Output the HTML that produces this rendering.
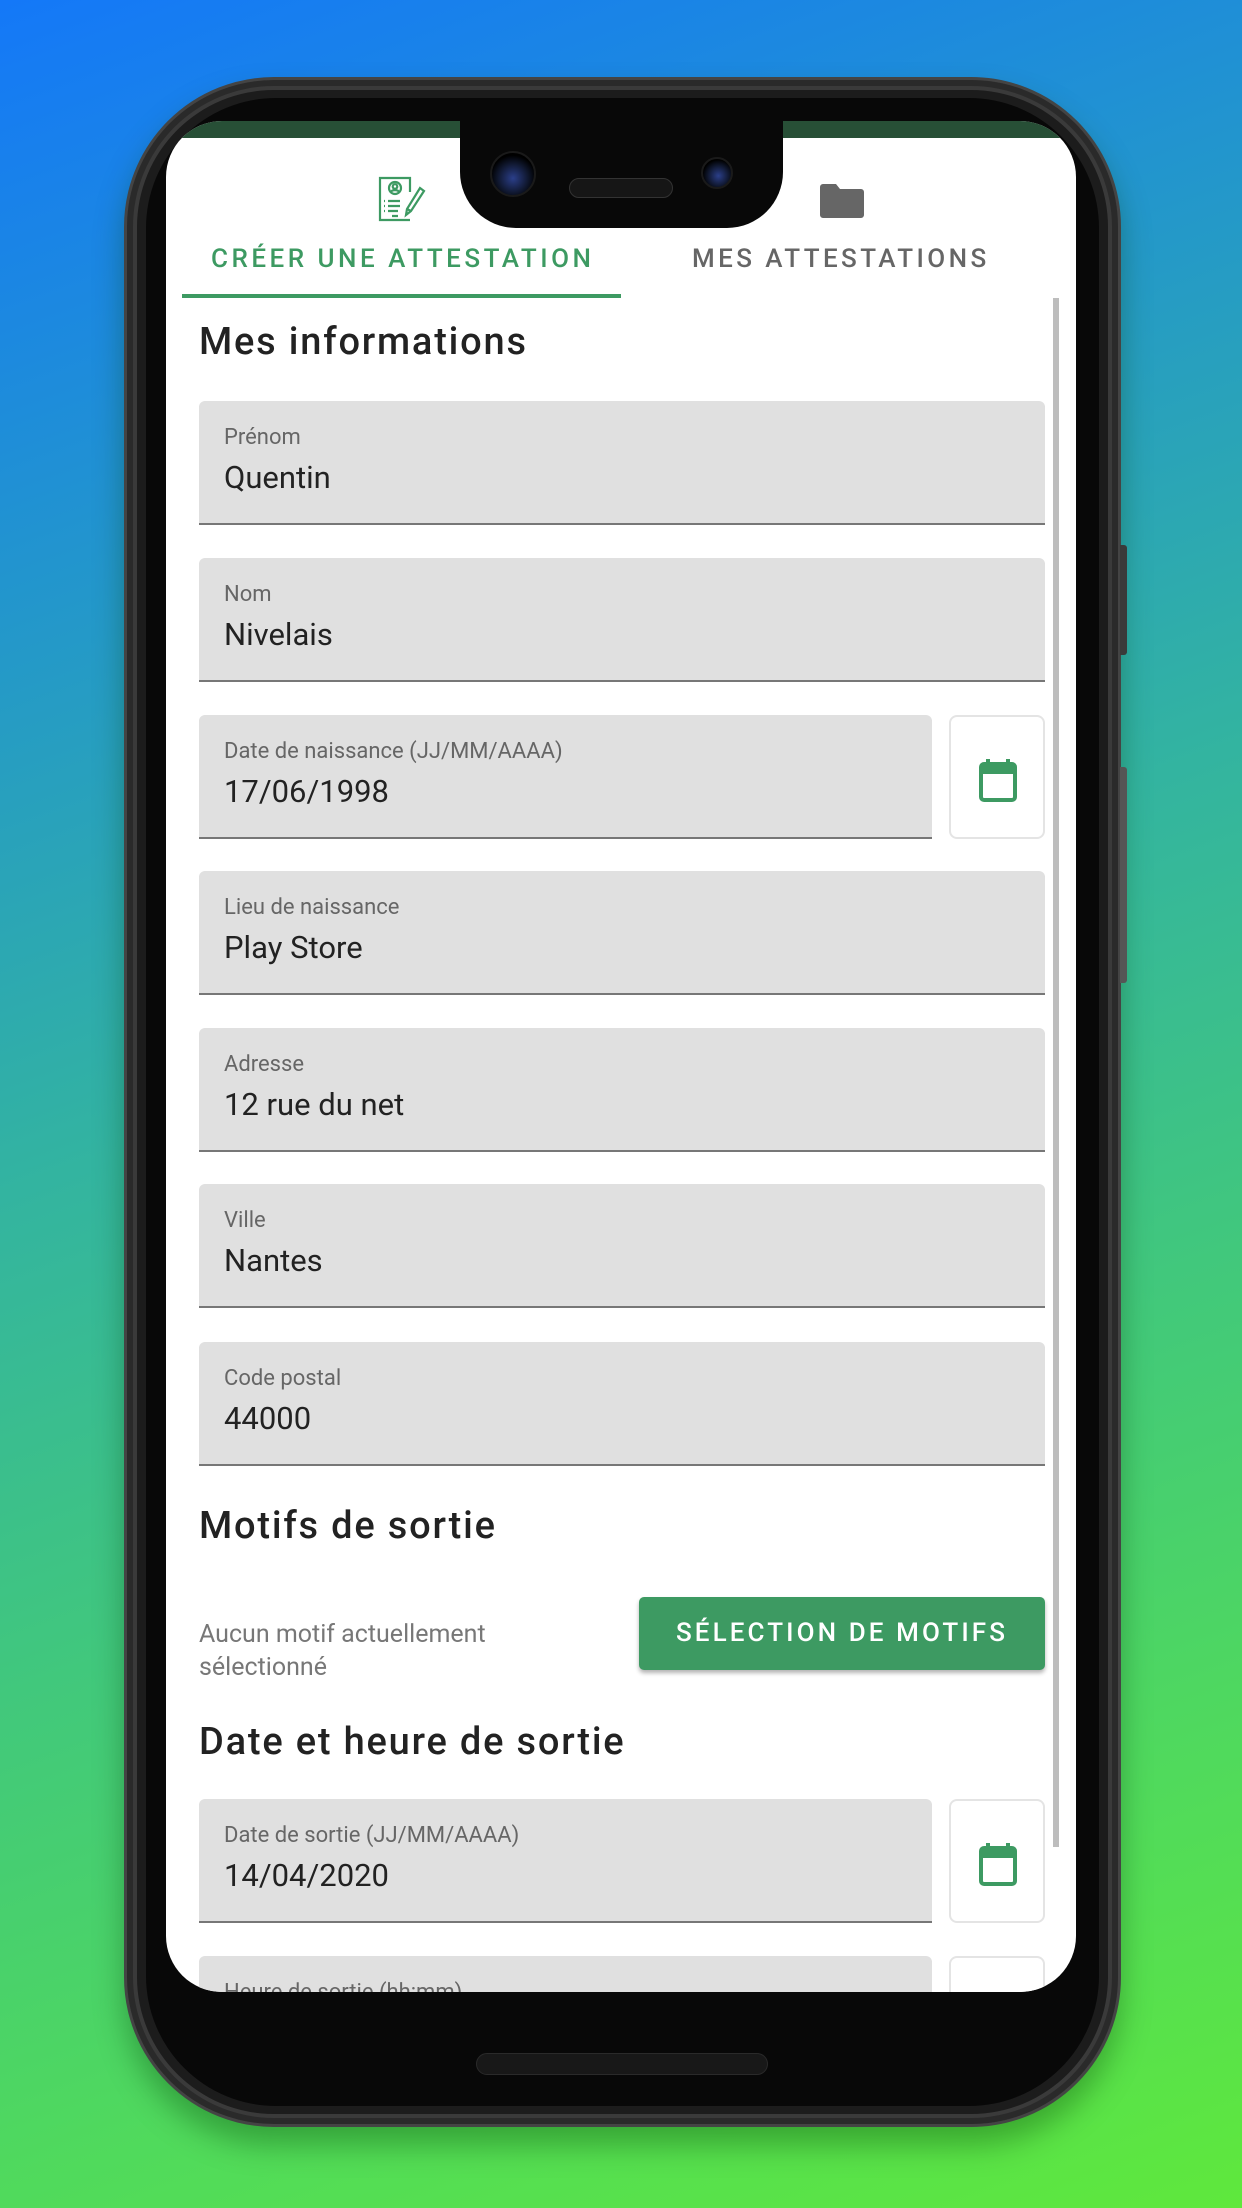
<!DOCTYPE html>
<html><head><meta charset="utf-8">
<style>
*{margin:0;padding:0;box-sizing:border-box}
html,body{width:1242px;height:2208px;overflow:hidden}
body{position:relative;font-family:"Roboto","Liberation Sans",sans-serif;
background:linear-gradient(160deg,#1478f8 0%,#2499c8 25%,#33b4a0 45%,#42c97a 65%,#52dc58 85%,#5fe83c 100%)}
.abs{position:absolute}
.phone{left:124px;top:77px;width:997px;height:2050px;border-radius:150px;background:#1c1c1c;
border:3px solid #444;box-shadow:0 18px 30px rgba(0,60,0,.35), inset 0 0 0 6px #2a2a2a, inset 0 0 0 10px #3a3a3a}
.bezel{left:146px;top:98px;width:953px;height:2008px;border-radius:130px;background:#080808}
.screen{left:166px;top:121px;width:910px;height:1871px;border-radius:56px;background:#fff;overflow:hidden}
.status{left:0;top:0;width:910px;height:17px;background:#274f36}
.notch{left:294px;top:-10px;width:323px;height:117px;background:#080808;border-radius:0 0 56px 56px}
.field{position:absolute;left:33px;width:846px;height:124px;background:#e0e0e0;border-radius:6px 6px 0 0;border-bottom:2px solid #777}
.field.short{width:733px}
.lab{position:absolute;left:25px;top:24px;font-size:22px;color:#666}
.val{position:absolute;left:25px;top:58px;font-size:31px;color:#222}
.cal{position:absolute;left:783px;width:96px;height:124px;border:2px solid #e4e4e4;border-radius:8px;background:#fff}
.cal svg{position:absolute;left:27px;top:40px}
h2{position:absolute;left:33px;font-size:38px;font-weight:500;color:#222;letter-spacing:1.8px}
</style></head><body>
<div class="abs phone"></div>
<div class="abs" style="left:1120px;top:545px;width:7px;height:110px;background:#3a3a3a;border-radius:0 3px 3px 0"></div>
<div class="abs" style="left:1120px;top:767px;width:7px;height:216px;background:#555;border-radius:0 3px 3px 0"></div>
<div class="abs bezel"></div>
<div class="abs screen">
  <div class="abs status"></div>
  <svg class="abs" style="left:212px;top:55px" width="48" height="48" viewBox="0 0 48 48" fill="none" stroke="#3d9a62" stroke-width="2.2">
    <path d="M32 44H2V2h30v14"/>
    <circle cx="17" cy="12" r="6"/><circle cx="17" cy="10.5" r="2.3"/><path d="M13 16c1-2.5 7-2.5 8 0"/>
    <path d="M6 25h1M10 25h12M6 30h1M10 30h12M6 35h1M10 35h10M14 40h6"/>
    <path d="M42 12l4 3-13 20-5 4 1-6z"/><path d="M29 33l4 2"/>
  </svg>
  <svg class="abs" style="left:654px;top:63px" width="44" height="34" viewBox="0 0 44 34"><path d="M0 3a3 3 0 0 1 3-3h13l4 5h21a3 3 0 0 1 3 3v23a3 3 0 0 1-3 3H3a3 3 0 0 1-3-3z" fill="#666"/></svg>
  <div class="abs" style="left:45px;top:123px;font-size:26px;font-weight:500;color:#3d9a62;letter-spacing:3.5px">CRÉER UNE ATTESTATION</div>
  <div class="abs" style="left:526px;top:123px;font-size:26px;font-weight:500;color:#666;letter-spacing:3.4px">MES ATTESTATIONS</div>
  <div class="abs" style="left:16px;top:173px;width:439px;height:4px;background:#3d9a62"></div>
  <div class="abs" style="left:887px;top:177px;width:6px;height:1549px;background:#bdbdbd"></div>
  <div class="abs notch">
    <div class="abs" style="left:30px;top:40px;width:46px;height:46px;border-radius:50%;background:radial-gradient(circle at 50% 60%,#2b3f8a 0,#101830 45%,#000 70%);border:2px solid #1a1a1a"></div>
    <div class="abs" style="left:241px;top:46px;width:32px;height:32px;border-radius:50%;background:radial-gradient(circle at 55% 60%,#2b3f8a 0,#101830 45%,#000 70%);border:2px solid #1a1a1a"></div>
    <div class="abs" style="left:109px;top:67px;width:104px;height:20px;border-radius:10px;background:#161616;border:1px solid #333"></div>
  </div>
  <h2 style="top:199px">Mes informations</h2>
  <div class="field" style="top:280px"><div class="lab">Prénom</div><div class="val">Quentin</div></div>
  <div class="field" style="top:437px"><div class="lab">Nom</div><div class="val">Nivelais</div></div>
  <div class="field short" style="top:594px"><div class="lab">Date de naissance (JJ/MM/AAAA)</div><div class="val">17/06/1998</div></div>
  <div class="cal" style="top:594px"><svg width="40" height="46" viewBox="0 0 40 46"><rect x="3" y="7" width="34" height="36" rx="3" fill="none" stroke="#3d9a62" stroke-width="4"/><rect x="3" y="7" width="34" height="10" fill="#3d9a62"/><path d="M10 2v8M30 2v8" stroke="#3d9a62" stroke-width="4"/></svg></div>
  <div class="field" style="top:750px"><div class="lab">Lieu de naissance</div><div class="val">Play Store</div></div>
  <div class="field" style="top:907px"><div class="lab">Adresse</div><div class="val">12 rue du net</div></div>
  <div class="field" style="top:1063px"><div class="lab">Ville</div><div class="val">Nantes</div></div>
  <div class="field" style="top:1221px"><div class="lab">Code postal</div><div class="val">44000</div></div>
  <h2 style="top:1383px">Motifs de sortie</h2>
  <div class="abs" style="left:33px;top:1497px;font-size:25px;line-height:33px;color:#777">Aucun motif actuellement<br>sélectionné</div>
  <div class="abs" style="left:473px;top:1476px;width:406px;height:73px;background:#3d9a62;border-radius:5px;box-shadow:0 3px 4px rgba(0,0,0,.3);color:#fff;font-size:26px;font-weight:500;letter-spacing:3.1px;text-align:center;line-height:73px">SÉLECTION DE MOTIFS</div>
  <h2 style="top:1599px">Date et heure de sortie</h2>
  <div class="field short" style="top:1678px"><div class="lab">Date de sortie (JJ/MM/AAAA)</div><div class="val">14/04/2020</div></div>
  <div class="cal" style="top:1678px"><svg width="40" height="46" viewBox="0 0 40 46"><rect x="3" y="7" width="34" height="36" rx="3" fill="none" stroke="#3d9a62" stroke-width="4"/><rect x="3" y="7" width="34" height="10" fill="#3d9a62"/><path d="M10 2v8M30 2v8" stroke="#3d9a62" stroke-width="4"/></svg></div>
  <div class="field short" style="top:1835px"><div class="lab">Heure de sortie (hh:mm)</div></div>
  <div class="cal" style="top:1835px"></div>
</div>
<div class="abs" style="left:476px;top:2053px;width:292px;height:22px;border-radius:11px;background:#181818;border:1px solid #2a2a2a"></div>
</body></html>
